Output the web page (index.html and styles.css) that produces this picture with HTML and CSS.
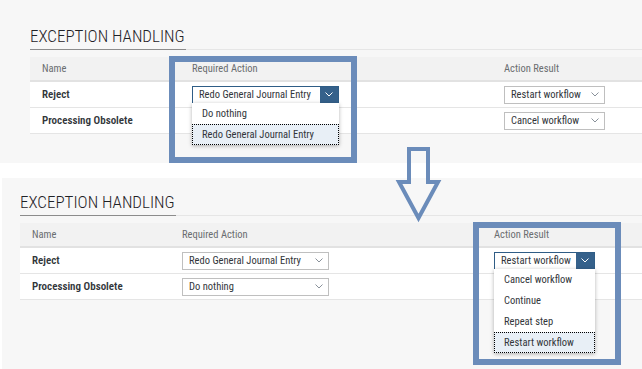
FILE: index.html
```html
<!DOCTYPE html>
<html lang="en">
<head>
    <meta charset="UTF-8">
    <title>Exception Handling</title>
    <link rel="stylesheet" href="styles.css">
</head>
<body>
<div class="page">
    <!-- before: required action list open -->
    <div class="panel panel-top">
        <div class="tabbar"><h2 class="title">EXCEPTION HANDLING</h2></div>
        <div class="table">
            <div class="row head">
                <div class="cell">Name</div>
                <div class="cell">Required Action</div>
                <div class="cell">Action Result</div>
            </div>
            <div class="row">
                <div class="cell name">Reject</div>
                <div class="cell">
                    <div class="select wide open">
                        <span class="select-text">Redo General Journal Entry</span>
                        <span class="select-arrow"><svg width="8" height="5" viewBox="0 0 8 5"><polyline points="0.5,0.5 4,4 7.5,0.5" fill="none" stroke="#fff" stroke-width="1"/></svg></span>
                        <div class="menu">
                            <div class="menu-item">Do nothing</div>
                            <div class="menu-item selected">Redo General Journal Entry</div>
                        </div>
                    </div>
                </div>
                <div class="cell">
                    <div class="select short">
                        <span class="select-text">Restart workflow</span>
                        <span class="select-arrow"><svg width="8" height="5" viewBox="0 0 8 5"><polyline points="0.5,0.5 4,4 7.5,0.5" fill="none" stroke="#89919a" stroke-width="1"/></svg></span>
                    </div>
                </div>
            </div>
            <div class="row">
                <div class="cell name">Processing Obsolete</div>
                <div class="cell"></div>
                <div class="cell">
                    <div class="select short">
                        <span class="select-text">Cancel workflow</span>
                        <span class="select-arrow"><svg width="8" height="5" viewBox="0 0 8 5"><polyline points="0.5,0.5 4,4 7.5,0.5" fill="none" stroke="#89919a" stroke-width="1"/></svg></span>
                    </div>
                </div>
            </div>
        </div>
    </div>

    <!-- after: action result list open -->
    <div class="panel panel-bottom">
        <div class="tabbar"><h2 class="title">EXCEPTION HANDLING</h2></div>
        <div class="table">
            <div class="row head">
                <div class="cell">Name</div>
                <div class="cell">Required Action</div>
                <div class="cell">Action Result</div>
            </div>
            <div class="row">
                <div class="cell name">Reject</div>
                <div class="cell">
                    <div class="select wide">
                        <span class="select-text">Redo General Journal Entry</span>
                        <span class="select-arrow"><svg width="8" height="5" viewBox="0 0 8 5"><polyline points="0.5,0.5 4,4 7.5,0.5" fill="none" stroke="#89919a" stroke-width="1"/></svg></span>
                    </div>
                </div>
                <div class="cell">
                    <div class="select short open">
                        <span class="select-text">Restart workflow</span>
                        <span class="select-arrow"><svg width="8" height="5" viewBox="0 0 8 5"><polyline points="0.5,0.5 4,4 7.5,0.5" fill="none" stroke="#fff" stroke-width="1"/></svg></span>
                        <div class="menu">
                            <div class="menu-item">Cancel workflow</div>
                            <div class="menu-item">Continue</div>
                            <div class="menu-item">Repeat step</div>
                            <div class="menu-item selected">Restart workflow</div>
                        </div>
                    </div>
                </div>
            </div>
            <div class="row">
                <div class="cell name">Processing Obsolete</div>
                <div class="cell">
                    <div class="select wide">
                        <span class="select-text">Do nothing</span>
                        <span class="select-arrow"><svg width="8" height="5" viewBox="0 0 8 5"><polyline points="0.5,0.5 4,4 7.5,0.5" fill="none" stroke="#89919a" stroke-width="1"/></svg></span>
                    </div>
                </div>
                <div class="cell"></div>
            </div>
        </div>
    </div>

    <!-- annotations -->
    <div class="callout callout-a"></div>
    <div class="callout callout-b"></div>
    <svg class="arrow" width="48" height="80" viewBox="0 0 48 80">
        <polygon points="14,5 33,5 33,38 43,38 23.5,74 4,38 14,38" fill="none" stroke="#6b8cba" stroke-width="4" stroke-linejoin="miter"/>
    </svg>
</div>
</body>
</html>
```

FILE: styles.css
```css
body {
    margin: 0;
    background: #fff;
    font-family: "Roboto Condensed", "Liberation Sans Narrow", "Liberation Sans", sans-serif;
    color: #32363a;
}
.page {
    position: relative;
    width: 642px;
    height: 369px;
    overflow: hidden;
}
.panel {
    background: #f7f7f7;
    box-sizing: border-box;
}
.panel-top {
    height: 163px;
    padding: 26px 0 0 30px;
}
.panel-bottom {
    height: 191px;
    margin: 15px 0 0 2px;
    padding: 14px 0 0 18px;
}
.tabbar {
    display: flex;
    border-bottom: 1px solid #e6e6e6;
}
.title {
    margin: 0 0 -1px 0;
    padding: 0 1px 3px 0;
    font-size: 17px;
    line-height: 20px;
    font-weight: 300;
    color: #1f2226;
    border-bottom: 1px solid #8c8c8c;
}
.table {
    margin-top: 7px;
}
.row {
    display: grid;
    grid-template-columns: 162px 312px 1fr;
    height: 26px;
    background: #fff;
    border-bottom: 1px solid #e5e5e5;
    box-sizing: border-box;
}
.row.head {
    height: 25px;
    background: #f2f2f2;
    border-bottom: 2px solid #e2e2e2;
}
.cell {
    display: flex;
    align-items: center;
    font-size: 10.5px;
}
.cell:first-child {
    padding-left: 12px;
}
.head .cell {
    color: #6a6d70;
}
.cell.name {
    font-size: 11px;
    font-weight: 600;
    color: #32363a;
}
.select {
    position: relative;
    display: flex;
    align-items: center;
    height: 18px;
    box-sizing: border-box;
    border: 1px solid #bfbfbf;
    background: #fff;
}
.select.wide {
    width: 147px;
}
.select.short {
    width: 101px;
}
.select-text {
    flex: 1;
    padding-left: 6px;
    font-size: 10.5px;
    white-space: nowrap;
    overflow: hidden;
}
.select-arrow {
    width: 18px;
    align-self: stretch;
    display: flex;
    align-items: center;
    justify-content: center;
}
.select.open {
    border-color: #2f5d86;
}
.select.open .select-arrow {
    background: #35618b;
}
.menu {
    position: absolute;
    top: 100%;
    left: -1px;
    right: -1px;
    background: #fff;
    box-shadow: 0 1px 4px rgba(0, 0, 0, 0.3);
    z-index: 2;
}
.menu-item {
    height: 21px;
    line-height: 21px;
    padding-left: 10px;
    font-size: 10.5px;
    color: #32363a;
    white-space: nowrap;
}
.menu-item.selected {
    background: #e8eff6;
    outline: 1px dotted #000;
    outline-offset: -1px;
}
.callout {
    position: absolute;
    border: 6px solid #6b8cba;
    box-sizing: border-box;
    z-index: 3;
}
.callout-a {
    left: 169px;
    top: 56px;
    width: 188px;
    height: 107px;
}
.callout-b {
    left: 473px;
    top: 222px;
    width: 148px;
    height: 143px;
}
.arrow {
    position: absolute;
    left: 395px;
    top: 144px;
    z-index: 3;
}
```
